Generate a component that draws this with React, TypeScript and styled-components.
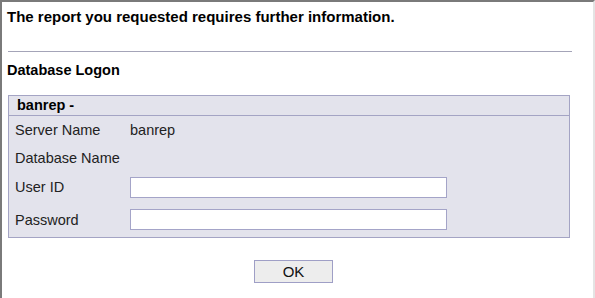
import styled, { createGlobalStyle } from "styled-components";

const GlobalStyle = createGlobalStyle`
  html, body {
    margin: 0;
    padding: 0;
    background: #ffffff;
    overflow: hidden;
  }
  body {
    font-family: "Liberation Sans", Arial, sans-serif;
    color: #000;
  }
`;

export default function App() {
  return (
    <>
      <GlobalStyle />
      <Frame>
        <Title>The report you requested requires further information.</Title>
        <Rule />
        <SectionTitle>Database Logon</SectionTitle>
        <Panel>
          <PanelHeader>banrep -</PanelHeader>
          <Row $h={28}>
            <Label>Server Name</Label>
            <Value>banrep</Value>
          </Row>
          <Row $h={28}>
            <Label>Database Name</Label>
          </Row>
          <Row $h={30}>
            <Label>User ID</Label>
            <Field type="text" />
          </Row>
          <Row $h={35}>
            <Label>Password</Label>
            <Field type="password" />
          </Row>
        </Panel>
        <Actions>
          <OkButton>OK</OkButton>
        </Actions>
      </Frame>
    </>
  );
}

const Frame = styled.div`
  box-sizing: border-box;
  width: 595px;
  height: 298px;
  border-top: 2px solid #7a7a7a;
  border-left: 2px solid #7a7a7a;
  border-right: 2px solid #e4e4e4;
  padding: 5px 21px 0 5px;
  display: flex;
  flex-direction: column;
`;

const Title = styled.div`
  font-weight: bold;
  font-size: 15px;
  line-height: 18px;
  padding-top: 1px;
`;

const Rule = styled.div`
  height: 1px;
  background: #a4a4b8;
  margin: 25px 0 0 1px;
`;

const SectionTitle = styled.div`
  font-weight: bold;
  font-size: 14.5px;
  line-height: 17px;
  margin-top: 10px;
`;

const Panel = styled.div`
  margin: 16px 2px 0 1px;
  border: 1px solid #a4a4c4;
  background: #e3e3ec;
  display: flex;
  flex-direction: column;
`;

const PanelHeader = styled.div`
  height: 19px;
  line-height: 19px;
  border-bottom: 1px solid #a4a4c4;
  padding-left: 8px;
  font-weight: bold;
  font-size: 14.5px;
`;

const Row = styled.div<{ $h: number }>`
  height: ${(p) => p.$h}px;
  display: flex;
  align-items: center;
  padding-left: 6px;
`;

const Label = styled.div`
  width: 115px;
  font-size: 14.5px;
  color: #222;
`;

const Value = styled.div`
  font-size: 14.5px;
  color: #222;
`;

const Field = styled.input`
  box-sizing: border-box;
  width: 317px;
  height: 21px;
  margin: 0;
  border: 1px solid #a4a4c8;
  background: #fff;
  outline: none;
`;

const Actions = styled.div`
  display: flex;
  justify-content: center;
  padding-left: 8px;
  margin-top: 22px;
`;

const OkButton = styled.button`
  box-sizing: border-box;
  width: 79px;
  height: 23px;
  border: 1px solid #9f9fc6;
  background: #ededed;
  font-family: "Liberation Sans", Arial, sans-serif;
  font-size: 15px;
  color: #111;
  padding: 0;
  cursor: pointer;
`;
